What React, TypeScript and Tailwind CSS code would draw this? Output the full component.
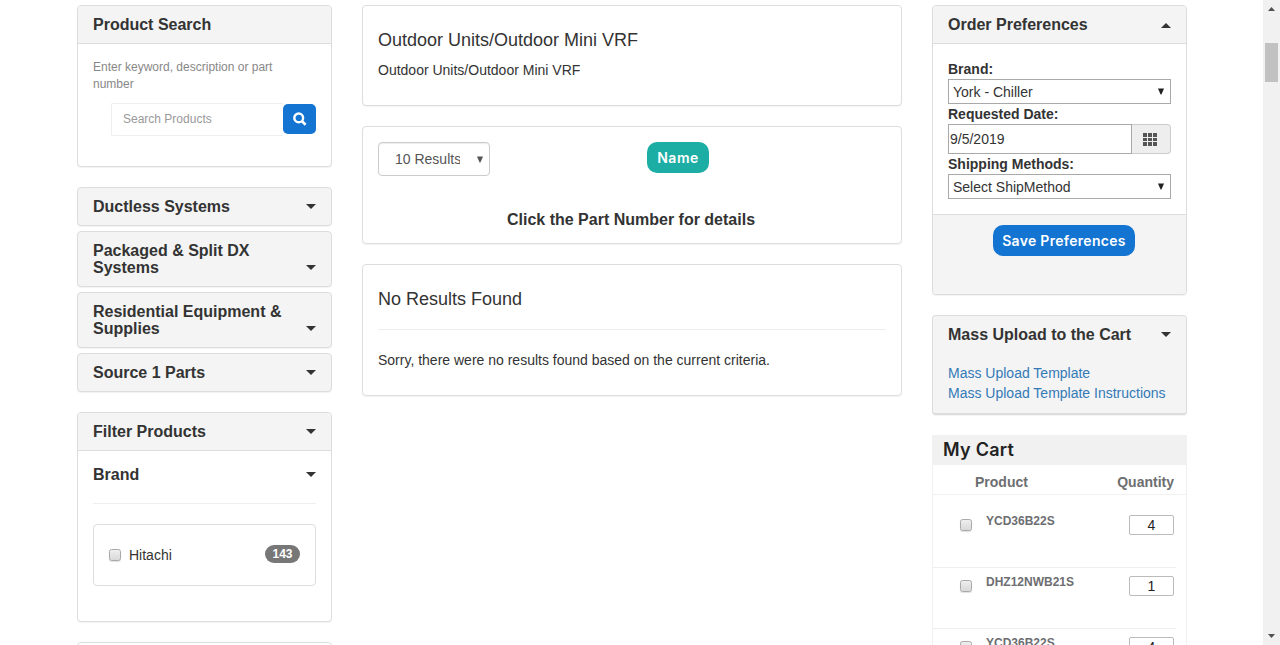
import React from "react";

const card = "shrink-0 rounded border border-[#ddd] bg-white shadow-[0_1px_1px_rgba(0,0,0,0.05)]";
const heading = "text-[16px] font-bold leading-[17px]";

function Caret({ up = false }: { up?: boolean }) {
  return (
    <svg width="10" height="5" viewBox="0 0 10 5" className="shrink-0">
      <path d={up ? "M0 5 5 0l5 5Z" : "M0 0h10L5 5Z"} fill="#333" />
    </svg>
  );
}

function SelectArrow({ color = "#222" }: { color?: string }) {
  return (
    <svg width="6" height="7" viewBox="0 0 6 7" className="shrink-0">
      <path d="M0 .5h6L3.4 6.5h-.8Z" fill={color} />
    </svg>
  );
}

function Check() {
  return (
    <span className="block h-3 w-3 shrink-0 rounded-[2.5px] border border-[#a9a9a9] bg-linear-to-b from-[#eee] to-[#d9d9d9] shadow-[0_1px_1px_rgba(0,0,0,0.12)]" />
  );
}

function Category({ lines }: { lines: string[] }) {
  return (
    <div className="flex items-end justify-between rounded border border-[#ddd] bg-[#f4f4f4] px-[15px] py-2.5 shadow-[0_1px_1px_rgba(0,0,0,0.05)]">
      <div className={`${heading} whitespace-nowrap`}>
        {lines.map((l) => (
          <div key={l}>{l}</div>
        ))}
      </div>
      <div className="pb-1.5">
        <Caret />
      </div>
    </div>
  );
}

function CartRow({ name, qty, height }: { name: string; qty: number; height: string }) {
  return (
    <div className={`mr-[10px] flex shrink-0 items-start border-b border-[#eee] pl-[27px] ${height}`}>
      <div className="mt-1">
        <Check />
      </div>
      <div className="-mt-px ml-[14px] grow text-[12px] font-bold leading-[14px] text-[#6d6e71]">{name}</div>
      <div className="mr-[2px] h-5 w-[45px] rounded-[2px] border border-[#bbb] text-center text-[14px] leading-[19px] text-[#222]">
        {qty}
      </div>
    </div>
  );
}

export default function App() {
  return (
    <div className="flex h-[645px] w-[1280px] overflow-hidden bg-white font-['Liberation_Sans',Arial,sans-serif] text-[14px] leading-5 text-[#333]">
      <main className="flex h-[645px] w-[1263px] items-start gap-[30px] overflow-hidden pt-[5px] pl-[77px]">
        <aside className="flex w-[255px] shrink-0 flex-col">
          <section className={`${card} h-[162px]`}>
            <div className="h-[38px] rounded-t border-b border-[#ddd] bg-[#f4f4f4] px-[15px] pt-2.5">
              <h2 className={heading}>Product Search</h2>
            </div>
            <p className="px-[15px] pt-[15px] text-[12px] leading-[17px] text-[#888]">
              Enter keyword, description or part
              <br />
              number
            </p>
            <div className="mt-2.5 ml-[33px] flex items-start">
              <div className="h-[33px] w-[172px] rounded-l-[2px] border border-r-0 border-[#eee] pl-[11px] text-[12px] leading-[31px] text-[#999]">
                Search Products
              </div>
              <button className="mt-px flex h-[30px] w-[33px] items-center justify-center rounded-[5px] bg-[#1474d2]">
                <svg width="14" height="14" viewBox="0 0 14 14" fill="none" stroke="#fff">
                  <circle cx="5.7" cy="5.9" r="4.4" strokeWidth="2.4" />
                  <path d="m9 9.2 3.6 3.5" strokeWidth="2.6" />
                </svg>
              </button>
            </div>
          </section>
          <div className="mt-5 flex flex-col gap-[5px]">
            <Category lines={["Ductless Systems"]} />
            <Category lines={["Packaged & Split DX", "Systems"]} />
            <Category lines={["Residential Equipment &", "Supplies"]} />
            <Category lines={["Source 1 Parts"]} />
          </div>
          <section className={`${card} mt-5 h-[210px]`}>
            <div className="flex h-[38px] items-center justify-between rounded-t border-b border-[#ddd] bg-[#f4f4f4] px-[15px]">
              <h2 className={heading}>Filter Products</h2>
              <Caret />
            </div>
            <div className="mx-[15px] flex h-[53px] items-start justify-between border-b border-[#eee] pt-[15px]">
              <h3 className={heading}>Brand</h3>
              <div className="pt-[6px]">
                <Caret />
              </div>
            </div>
            <div className="mx-[15px] mt-5 flex h-[62px] items-center rounded border border-[#ddd] px-[15px]">
              <Check />
              <span className="ml-2 grow">Hitachi</span>
              <span className="-mt-0.5 h-[18px] w-[35px] rounded-full bg-[#777] text-center text-[12px] font-bold leading-[18px] text-white">
                143
              </span>
            </div>
          </section>
          <section className={`${card} mt-5 h-10`} />
        </aside>

        <section className="flex w-[540px] shrink-0 flex-col gap-5">
          <div className={`${card} h-[101px] px-[15px] pt-6`}>
            <h1 className="text-[18px] leading-5">Outdoor Units/Outdoor Mini VRF</h1>
            <p className="mt-2.5">Outdoor Units/Outdoor Mini VRF</p>
          </div>
          <div className={`${card} h-[118px] px-[15px] pt-[15px]`}>
            <div className="flex items-start">
              <div className="flex h-[34px] w-28 items-center rounded border border-[#ccc] pl-4 text-[#555] shadow-[inset_0_1px_1px_rgba(0,0,0,0.075)]">
                <span className="w-[65px] overflow-hidden whitespace-nowrap">10 Results</span>
                <span className="ml-[17px] flex">
                  <SelectArrow color="#555" />
                </span>
              </div>
              <button className="ml-[157px] h-[31px] w-[62px] rounded-[10px] bg-[#1cada4] font-['Inter',sans-serif] text-[14px] font-semibold leading-[30px] tracking-[0.5px] text-white">
                Name
              </button>
            </div>
            <p className={`${heading} mt-[35px] pr-[2px] text-center`}>Click the Part Number for details</p>
          </div>
          <div className={`${card} h-[132px] px-[15px] pt-6`}>
            <h2 className="border-b border-[#eee] pb-5 text-[18px] leading-5">No Results Found</h2>
            <p className="mt-5">Sorry, there were no results found based on the current criteria.</p>
          </div>
        </section>

        <aside className="flex w-[255px] shrink-0 flex-col">
          <section className={`${card} flex h-[290px] flex-col`}>
            <div className="flex h-[38px] shrink-0 items-center justify-between rounded-t border-b border-[#ddd] bg-[#f4f4f4] px-[15px]">
              <h2 className={heading}>Order Preferences</h2>
              <div className="pt-0.5">
                <Caret up />
              </div>
            </div>
            <div className="h-[170px] shrink-0 px-[15px] pt-[15px]">
              <div className="font-bold">Brand:</div>
              <div className="flex h-[25px] items-center justify-between border border-[#a9a9a9] pr-[6px] pl-1">
                York - Chiller
                <SelectArrow />
              </div>
              <div className="font-bold">Requested Date:</div>
              <div className="flex h-[30px]">
                <div className="grow border border-[#a9a9a9] pl-px leading-7">9/5/2019</div>
                <div className="flex w-[39px] items-center justify-center rounded-r border border-l-0 border-[#ccc] bg-[#eee] pr-[2px]">
                  <svg width="14" height="13" viewBox="0 0 14 13" fill="#555">
                    <path d="M0 0h4v4H0zM5 0h4v4H5zM10 0h4v4h-4zM0 5h4v3H0zM5 5h4v3H5zM10 5h4v3h-4zM0 9h4v4H0zM5 9h4v4H5zM10 9h4v4h-4z" />
                  </svg>
                </div>
              </div>
              <div className="font-bold">Shipping Methods:</div>
              <div className="flex h-[25px] items-center justify-between border border-[#a9a9a9] pr-[6px] pl-1">
                Select ShipMethod
                <SelectArrow />
              </div>
            </div>
            <div className="flex grow items-start justify-center rounded-b border-t border-[#ddd] bg-[#f4f4f4] pt-2.5 pl-[9px]">
              <button className="h-[31px] w-[142px] rounded-[10px] bg-[#1474d2] font-['Inter',sans-serif] text-[14px] font-semibold leading-[30px] tracking-[0.3px] text-white">
                Save Preferences
              </button>
            </div>
          </section>
          <section className="mt-5 h-[100px] shrink-0 rounded border border-b-2 border-[#ddd] bg-[#f4f4f4] px-[15px] pt-2.5 shadow-[0_1px_1px_rgba(0,0,0,0.05)]">
            <div className="flex items-center justify-between">
              <h2 className={heading}>Mass Upload to the Cart</h2>
              <Caret />
            </div>
            <div className="mt-5 text-[#337ab7]">
              <a className="block">Mass Upload Template</a>
              <a className="block whitespace-nowrap">Mass Upload Template Instructions</a>
            </div>
          </section>
          <section className="mt-5 flex h-[260px] shrink-0 flex-col border-x border-[#f1f1f1]">
            <h2 className="h-[30px] shrink-0 bg-[#f1f1f1] pl-[10px] font-['Inter',sans-serif] text-[18px] font-semibold leading-[30px] tracking-[0.25px] text-[#222]">
              My Cart
            </h2>
            <div className="flex h-[30px] shrink-0 justify-between border-b border-[#f1f1f1] pt-[7px] pr-3 pl-[42px] font-bold text-[#6d6e71]">
              <span>Product</span>
              <span>Quantity</span>
            </div>
            <CartRow name="YCD36B22S" qty={4} height="h-[73px] pt-[20px]" />
            <CartRow name="DHZ12NWB21S" qty={1} height="h-[61px] pt-[8px]" />
            <CartRow name="YCD36B22S" qty={4} height="h-[61px] pt-[8px]" />
          </section>
        </aside>
      </main>
      <div className="flex h-[645px] w-[17px] shrink-0 flex-col items-center bg-[#f1f1f1]">
        <svg width="7" height="4" viewBox="0 0 7 4" className="mt-[7px] shrink-0">
          <path d="M0 4 3.5 0 7 4Z" fill="#505050" />
        </svg>
        <div className="mt-8 h-[39px] w-[13px] shrink-0 bg-[#c1c1c1]" />
        <svg width="7" height="4" viewBox="0 0 7 4" className="mt-auto mb-[7px] shrink-0">
          <path d="M0 0h7L3.5 4Z" fill="#505050" />
        </svg>
      </div>
    </div>
  );
}
